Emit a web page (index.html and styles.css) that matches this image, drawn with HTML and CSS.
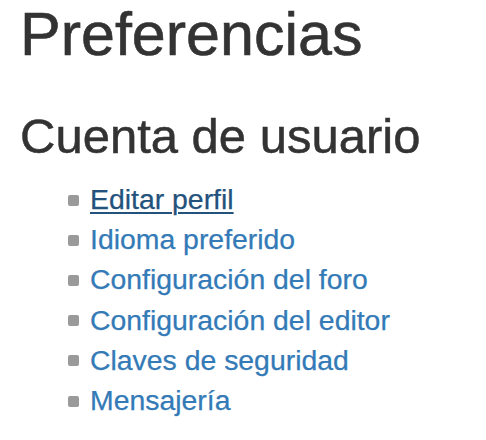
FILE: index.html
```html
<!DOCTYPE html>
<html lang="es">
<head>
<meta charset="utf-8">
<title>Preferencias</title>
<link rel="stylesheet" href="styles.css">
</head>
<body>
<main class="page">
  <h1 class="title">Preferencias</h1>
  <h2 class="subtitle">Cuenta de usuario</h2>
  <ul class="menu">
    <li class="menu-item"><a class="menu-link is-active" href="#">Editar perfil</a></li>
    <li class="menu-item"><a class="menu-link" href="#">Idioma preferido</a></li>
    <li class="menu-item"><a class="menu-link" href="#">Configuración del foro</a></li>
    <li class="menu-item"><a class="menu-link" href="#">Configuración del editor</a></li>
    <li class="menu-item"><a class="menu-link" href="#">Claves de seguridad</a></li>
    <li class="menu-item"><a class="menu-link" href="#">Mensajería</a></li>
  </ul>
</main>
</body>
</html>
```
FILE: styles.css
```css
html, body {
  margin: 0;
  padding: 0;
  background: #fff;
}
body {
  font-family: "Liberation Sans", Arial, Helvetica, sans-serif;
  color: #333;
}
.page {
  padding: 4px 20px 0 20px;
}
.title {
  margin: 0;
  font-size: 61px;
  line-height: 60px;
  font-weight: normal;
  color: #333;
  -webkit-text-stroke: 0.6px #333;
}
.subtitle {
  margin: 48px 0 0 0;
  font-size: 49px;
  line-height: 49px;
  font-weight: normal;
  color: #333;
  -webkit-text-stroke: 0.5px #333;
}
.menu {
  list-style: none;
  margin: 18px 0 0 0;
  padding: 0 0 0 48px;
}
.menu-item {
  display: flex;
  align-items: center;
  gap: 11px;
  font-size: 28.4px;
  line-height: 40.2px;
}
.menu-item::before {
  content: "";
  width: 11px;
  height: 11px;
  border-radius: 2px;
  background: #9a9a9a;
  flex: none;
  margin-top: 2px;
}
.menu-link {
  color: #337ab7;
  text-decoration: none;
  -webkit-text-stroke: 0.25px currentColor;
}
.menu-link.is-active {
  color: #23527c;
  text-decoration: underline;
  text-decoration-thickness: 2px;
  text-underline-offset: 3px;
}
```
